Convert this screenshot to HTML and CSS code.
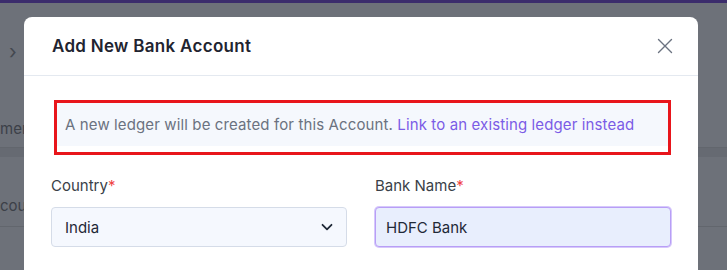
FILE: index.html
```html
<!DOCTYPE html>
<html lang="en">

<head>
  <meta charset="utf-8" />
  <meta name="viewport" content="width=device-width, initial-scale=1.0" />
  <title>Add New Bank Account</title>
  <link rel="stylesheet" href="styles.css">
</head>

<body>
  <!-- Page behind the dialog -->
  <div class="topbar"></div>
  <div class="page">
    <div class="crumb">&rsaquo;</div>
    <div class="tab-row">mer</div>
    <div class="table-head"></div>
    <div class="table-row">cou</div>
  </div>

  <!-- Dialog -->
  <div class="modal">
    <div class="modal-header">
      <h3>Add New Bank Account</h3>
      <button class="close-btn" aria-label="Close">
        <svg width="16" height="16" viewBox="0 0 16 16">
          <path d="M1.5 1.5L14.5 14.5M14.5 1.5L1.5 14.5" stroke="#6b7280" stroke-width="1.4" fill="none" stroke-linecap="round" />
        </svg>
      </button>
    </div>

    <div class="modal-body">
      <div class="highlight">
        <p class="info">A new ledger will be created for this Account. <a href="#">Link to an existing ledger instead</a></p>
      </div>

      <div class="form-grid">
        <div class="field">
          <label>Country<span class="req">*</span></label>
          <div class="select">
            <span>India</span>
            <svg width="14" height="14" viewBox="0 0 14 14">
              <path d="M2.5 4.8L7 9.3L11.5 4.8" stroke="#1f2937" stroke-width="1.8" fill="none" stroke-linecap="round" stroke-linejoin="round" />
            </svg>
          </div>
        </div>
        <div class="field">
          <label>Bank Name<span class="req">*</span></label>
          <input class="text-input" type="text" value="HDFC Bank">
        </div>
      </div>
    </div>
  </div>
</body>

</html>
```

FILE: styles.css
```css
/* Global Reset */
* {
  margin: 0;
  padding: 0;
  box-sizing: border-box;
}

html,
body {
  height: 100%;
}

body {
  font-family: 'Inter', 'Noto Sans', sans-serif;
  background-color: #6d7179;
  color: #374151;
  overflow: hidden;
}

/* Dimmed page behind */
.topbar {
  height: 3px;
  background-color: #3b2c6c;
}

.page {
  display: flex;
  flex-direction: column;
  color: #3c4048;
  font-size: 15px;
}

.crumb {
  height: 98px;
  padding: 37px 0 0 9px;
  font-size: 20px;
  line-height: 24px;
  color: #44484f;
}

.tab-row {
  height: 46px;
  padding-top: 19px;
  line-height: 18px;
}

.table-head {
  height: 10px;
  background-color: #666a72;
  border-top: 1px solid #62666d;
}

.table-row {
  height: 70px;
  padding-top: 40px;
  line-height: 18px;
  border-bottom: 1px solid #62666d;
}

/* Dialog */
.modal {
  position: absolute;
  top: 17px;
  left: 24px;
  width: 674px;
  height: 253px;
  overflow: hidden;
  background-color: white;
  border-radius: 8px 8px 0 0;
}

.modal-header {
  height: 59px;
  display: flex;
  align-items: center;
  justify-content: space-between;
  padding: 0 25px 0 28px;
  border-bottom: 1px solid #e4e9f0;
}

.modal-header h3 {
  font-size: 17px;
  font-weight: 600;
  color: #1f2430;
  letter-spacing: 0.3px;
}

.close-btn {
  background: none;
  border: none;
  width: 16px;
  height: 16px;
  display: flex;
  cursor: pointer;
}

.modal-body {
  padding: 24px 27px 0 27px;
}

.highlight {
  border: 3px solid #e8151b;
  padding-bottom: 6px;
  margin: 0 0 22px 3px;
}

.info {
  background-color: #f5f8fd;
  padding: 0 8px;
  height: 43px;
  line-height: 43px;
  font-size: 15px;
  letter-spacing: 0.12px;
  color: #6b7280;
  white-space: nowrap;
}

.info a {
  color: #7b5ce6;
  text-decoration: none;
}

.form-grid {
  display: grid;
  grid-template-columns: 296px 296px;
  gap: 28px;
}

.field label {
  display: block;
  font-size: 15px;
  line-height: 18px;
  color: #3a3f48;
  margin-bottom: 12px;
}

.req {
  color: #ef4444;
}

.select {
  height: 40px;
  display: flex;
  align-items: center;
  justify-content: space-between;
  padding: 0 12px 0 13px;
  background-color: #f5f8fe;
  border: 1px solid #d5dce8;
  border-radius: 4px;
  font-size: 15px;
  color: #1f2937;
}

.text-input {
  width: 100%;
  height: 40px;
  padding: 0 10px;
  background-color: #e8eefd;
  border: 1px solid #b89ef6;
  box-shadow: 0 0 0 1px #d6c8fb;
  border-radius: 4px;
  font-family: inherit;
  font-size: 15px;
  color: #1f2937;
  outline: none;
}
```
